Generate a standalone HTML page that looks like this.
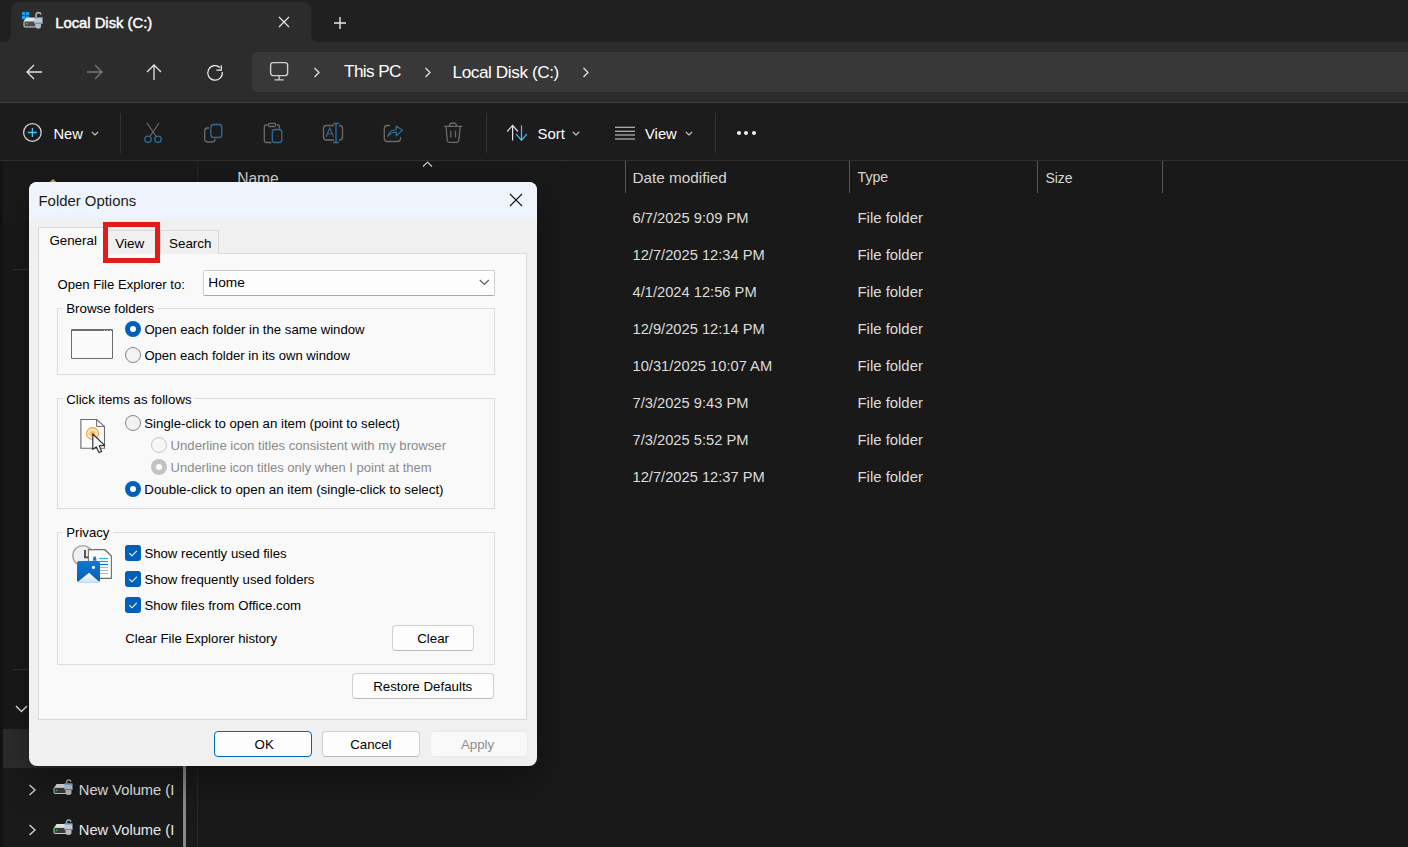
<!DOCTYPE html>
<html><head><meta charset="utf-8">
<style>
*{margin:0;padding:0;box-sizing:border-box}
html,body{width:1408px;height:847px;overflow:hidden;background:#191919;font-family:"Liberation Sans",sans-serif}
.a{position:absolute}
.t{position:absolute;line-height:1;white-space:nowrap}
svg{position:absolute;overflow:visible}
</style></head><body>
<div class="a" style="left:0;top:0;width:1408px;height:42px;background:#202020"></div>
<div class="a" style="left:11px;top:2px;width:300px;height:41px;background:#2c2c2c;border-radius:8px 8px 0 0"></div>
<svg style="left:3px;top:34px" width="8" height="8"><path d="M0 8 Q8 8 8 0 L8 8 Z" fill="#2c2c2c"/></svg>
<svg style="left:311px;top:34px" width="8" height="8"><path d="M8 8 Q0 8 0 0 L0 8 Z" fill="#2c2c2c"/></svg>
<div class="a" style="left:0;top:42px;width:1408px;height:60px;background:#2c2c2c"></div>
<div class="a" style="left:252px;top:52px;width:1170px;height:40px;background:#383838;border-radius:5px"></div>
<div class="a" style="left:0;top:102px;width:1408px;height:58px;background:#1c1c1c"></div>
<div class="a" style="left:0;top:102px;width:1408px;height:1px;background:#3d3d3d"></div>
<div class="a" style="left:0;top:160px;width:1408px;height:1px;background:#2f2f2f"></div>
<div class="a" style="left:0;top:161px;width:3px;height:686px;background:#131313"></div>
<div class="a" style="left:3px;top:161px;width:194px;height:686px;background:#1a1a1a"></div>
<div class="a" style="left:197px;top:161px;width:1px;height:686px;background:#282828"></div>
<div class="a" style="left:13px;top:269px;width:184px;height:1px;background:#333"></div>
<div class="a" style="left:13px;top:669px;width:184px;height:1px;background:#333"></div>
<div class="a" style="left:3px;top:729px;width:180px;height:39px;background:#2d2d2d"></div>
<div class="a" style="left:183px;top:600px;width:3px;height:247px;background:#8a8a8a;border-radius:1.5px"></div>
<svg style="left:44px;top:176px" width="18" height="10"><path d="M9 3 L17 10 L1 10 Z" fill="#f0a030"/></svg>
<svg style="left:21px;top:11px" width="22" height="18">
<rect x="1" y="1" width="3.3" height="3.3" fill="#1ba1ee"/><rect x="5" y="1" width="3.3" height="3.3" fill="#1ba1ee"/>
<rect x="1" y="5" width="3.3" height="3.3" fill="#1ba1ee"/><rect x="5" y="5" width="3.3" height="3.3" fill="#0f86d8"/>
<path d="M3 10 L5 6.5 L15 6.5 L15 16 L3 16 Z" fill="#e6e6e6"/>
<rect x="3" y="10" width="12" height="6" rx="1" fill="#4a4a4a" stroke="#d8d8d8" stroke-width="1"/>
<circle cx="5.8" cy="12.6" r="0.9" fill="#37d83a"/>
<path d="M15 6.5 V3.5 A2.6 2.6 0 0 1 20 3.5" fill="none" stroke="#a8b0b8" stroke-width="1.6"/>
<rect x="13" y="6" width="8.5" height="7" fill="#c4c8cc"/>
<rect x="13" y="6" width="8.5" height="1.2" fill="#2b9af0"/><rect x="13" y="11.6" width="8.5" height="1.2" fill="#2b9af0"/>
<path d="M14.5 13 H20 V15 A2.5 2.5 0 0 1 14.5 15 Z" fill="#b8bcc0"/>
</svg>
<div class="t" style="left:55.2px;top:16.37px;font-size:14.8px;color:#fff;-webkit-text-stroke:0.45px #fff">Local Disk (C:)</div>
<svg style="left:278px;top:16px" width="12" height="12"><path d="M1 1 L11 11 M11 1 L1 11" stroke="#e8e8e8" stroke-width="1.2"/></svg>
<svg style="left:333px;top:16px" width="14" height="14"><path d="M7 1 V13 M1 7 H13" stroke="#e8e8e8" stroke-width="1.4"/></svg>
<svg style="left:26px;top:64px" width="17" height="16"><path d="M16 8 H1.2 M8 1 L1 8 L8 15" fill="none" stroke="#e4e4e4" stroke-width="1.3"/></svg>
<svg style="left:86px;top:64px" width="17" height="16"><path d="M1 8 H15.8 M9 1 L16 8 L9 15" fill="none" stroke="#7a7a7a" stroke-width="1.3"/></svg>
<svg style="left:146px;top:64px" width="16" height="17"><path d="M8 16 V1.2 M1 8 L8 1 L15 8" fill="none" stroke="#e4e4e4" stroke-width="1.3"/></svg>
<svg style="left:206px;top:64px" width="17" height="17"><path d="M16.3 8.0 A7.3 7.3 0 1 1 14.0 3.5" fill="none" stroke="#f0f0f0" stroke-width="1.2"/><path d="M15.3 1.2 V6.2 H10.4" fill="none" stroke="#f0f0f0" stroke-width="1.2"/></svg>
<svg style="left:269px;top:61px" width="21" height="21"><rect x="1.6" y="1.6" width="17" height="13" rx="2.5" fill="none" stroke="#d0d0d0" stroke-width="1.4"/><path d="M10.1 15 V18.6 M5.5 18.8 H14.7" stroke="#d0d0d0" stroke-width="1.3"/></svg>
<svg style="left:313px;top:67px" width="8" height="11"><path d="M1.5 1 L6 5.5 L1.5 10" fill="none" stroke="#e0e0e0" stroke-width="1.3"/></svg>
<svg style="left:424px;top:67px" width="8" height="11"><path d="M1.5 1 L6 5.5 L1.5 10" fill="none" stroke="#e0e0e0" stroke-width="1.3"/></svg>
<svg style="left:582px;top:67px" width="8" height="11"><path d="M1.5 1 L6 5.5 L1.5 10" fill="none" stroke="#e0e0e0" stroke-width="1.3"/></svg>
<div class="t" style="left:344px;top:63.04px;font-size:17.2px;color:#fff;letter-spacing:-0.6px">This PC</div>
<div class="t" style="left:452.5px;top:64.04px;font-size:17.2px;color:#fff;letter-spacing:-0.42px">Local Disk (C:)</div>
<svg style="left:22px;top:122px" width="21" height="21"><circle cx="10.4" cy="10.5" r="8.8" fill="none" stroke="#d2d2d2" stroke-width="1.3"/><path d="M10.4 6 V15 M5.9 10.5 H14.9" stroke="#4cc2ff" stroke-width="1.3"/></svg>
<div class="t" style="left:53.5px;top:127.06px;font-size:14.7px;color:#fff;">New</div>
<svg style="left:91px;top:131px" width="8" height="5"><path d="M0.8 0.8 L4 4 L7.2 0.8" fill="none" stroke="#cfcfcf" stroke-width="1.1"/></svg>
<div class="a" style="left:120px;top:113px;width:1px;height:40px;background:#333"></div>
<div class="a" style="left:486px;top:113px;width:1px;height:40px;background:#333"></div>
<div class="a" style="left:715px;top:113px;width:1px;height:40px;background:#333"></div>
<svg style="left:140px;top:118px" width="26" height="28"><path d="M7 5 L15.8 18 M19 5 L10.2 18" stroke="#6a6a6a" stroke-width="1.2" fill="none"/><circle cx="8" cy="21.3" r="3.2" fill="none" stroke="#316d95" stroke-width="1.3"/><circle cx="18" cy="21.3" r="3.2" fill="none" stroke="#316d95" stroke-width="1.3"/></svg>
<svg style="left:200px;top:118px" width="26" height="28"><path d="M9 10 H7.5 A3 3 0 0 0 4.7 13 V21 A3 3 0 0 0 7.5 24 H12 A3 3 0 0 0 15 21" fill="none" stroke="#6a6a6a" stroke-width="1.3"/><rect x="10.8" y="6.5" width="11" height="13" rx="3" fill="none" stroke="#316d95" stroke-width="1.3"/></svg>
<svg style="left:260px;top:118px" width="26" height="28"><path d="M7.5 7 H6 A2 2 0 0 0 4.3 9 V22.5 A2 2 0 0 0 6 24.5 H11.5 M17 7 H18.5 A1.5 1.5 0 0 1 19.3 8.5 V10.5" fill="none" stroke="#6a6a6a" stroke-width="1.3"/><rect x="8.3" y="5.3" width="7.5" height="3.2" rx="1.5" fill="none" stroke="#6a6a6a" stroke-width="1.3"/><rect x="12.3" y="11.5" width="9.5" height="13" rx="2.5" fill="none" stroke="#316d95" stroke-width="1.3"/></svg>
<svg style="left:320px;top:118px" width="26" height="28"><path d="M14 7.5 H6.5 A3 3 0 0 0 3.5 10.5 V19 A3 3 0 0 0 6.5 22 H14 M19 7.5 H19.5 A3 3 0 0 1 22.5 10.5 V19 A3 3 0 0 1 19.5 22 H19" fill="none" stroke="#6a6a6a" stroke-width="1.3"/><path d="M16 5.5 V24.5 M13.3 5.5 H18.8 M13.3 24.5 H18.8" stroke="#316d95" stroke-width="1.3"/><path d="M6 18.8 L9.8 10 L13.6 18.8 M7.3 15.8 H12.3" fill="none" stroke="#316d95" stroke-width="1.1"/></svg>
<svg style="left:380px;top:118px" width="26" height="28"><path d="M10 7.5 H7 A3 3 0 0 0 4.3 10.5 V20.5 A3 3 0 0 0 7 23.5 H17.5 A3 3 0 0 0 20.5 20.5 V19" fill="none" stroke="#6a6a6a" stroke-width="1.3"/><path d="M7.8 18.5 C9 13.5 12 11.5 16.2 11.8 V8 L22.5 12.2 L16.2 17.8 V14.2 C12.5 14 10 15.5 7.8 18.5 Z" fill="none" stroke="#316d95" stroke-width="1.2" stroke-linejoin="round"/></svg>
<svg style="left:440px;top:118px" width="26" height="28"><path d="M4 8.3 H22.3 M9.5 8 A3.5 3 0 0 1 16.5 8 M6 8.5 L7.3 22.5 A2 2 0 0 0 9.3 24.3 H16.8 A2 2 0 0 0 18.8 22.5 L20.2 8.5 M10.8 12.8 V19.5 M15.5 12.8 V19.5" fill="none" stroke="#6a6a6a" stroke-width="1.3"/></svg>
<svg style="left:505px;top:123px" width="24" height="20"><path d="M7.6 17.5 V2.6 M2.3 8.5 L7.6 2.4 L12.9 8.5" fill="none" stroke="#e4e4e4" stroke-width="1.2"/><path d="M16.5 2.6 V17.4 M11.2 11.2 L16.5 17.4 L21.8 11.2" fill="none" stroke="#4cc2ff" stroke-width="1.2"/></svg>
<div class="t" style="left:537.5px;top:126.89px;font-size:14.9px;color:#fff;">Sort</div>
<svg style="left:572px;top:131px" width="8" height="5"><path d="M0.8 0.8 L4 4 L7.2 0.8" fill="none" stroke="#cfcfcf" stroke-width="1.1"/></svg>
<svg style="left:614px;top:123px" width="22" height="18"><path d="M1 4.3 H21 M1 8.3 H21 M1 12 H21 M1 16 H21" stroke="#d8d8d8" stroke-width="1.1"/></svg>
<div class="t" style="left:645px;top:126.97px;font-size:14.8px;color:#fff;">View</div>
<svg style="left:685px;top:131px" width="8" height="5"><path d="M0.8 0.8 L4 4 L7.2 0.8" fill="none" stroke="#cfcfcf" stroke-width="1.1"/></svg>
<div class="a" style="left:736.6px;top:131.4px;width:4px;height:4px;border-radius:50%;background:#f0f0f0"></div>
<div class="a" style="left:744.4px;top:131.4px;width:4px;height:4px;border-radius:50%;background:#f0f0f0"></div>
<div class="a" style="left:752.2px;top:131.4px;width:4px;height:4px;border-radius:50%;background:#f0f0f0"></div>
<div class="a" style="left:625px;top:161px;width:1px;height:32px;background:#555"></div>
<div class="a" style="left:849px;top:161px;width:1px;height:32px;background:#555"></div>
<div class="a" style="left:1037px;top:161px;width:1px;height:32px;background:#555"></div>
<div class="a" style="left:1162px;top:161px;width:1px;height:32px;background:#555"></div>
<svg style="left:422px;top:161px" width="11" height="7"><path d="M1 5.5 L5.5 1.2 L10 5.5" fill="none" stroke="#dedede" stroke-width="1.05"/></svg>
<div class="t" style="left:237.2px;top:170.79px;font-size:15.6px;color:#d6d6d6;">Name</div>
<div class="t" style="left:632.5px;top:169.55px;font-size:15.3px;color:#d6d6d6;">Date modified</div>
<div class="t" style="left:857.5px;top:170.48px;font-size:14.2px;color:#d6d6d6;">Type</div>
<div class="t" style="left:1045.4px;top:170.65px;font-size:14.0px;color:#d6d6d6;">Size</div>
<div class="t" style="left:632.5px;top:211.06px;font-size:14.7px;color:#dcdcdc;">6/7/2025 9:09 PM</div>
<div class="t" style="left:857.5px;top:210.89px;font-size:14.9px;color:#dcdcdc;">File folder</div>
<div class="t" style="left:632.5px;top:248.06px;font-size:14.7px;color:#dcdcdc;">12/7/2025 12:34 PM</div>
<div class="t" style="left:857.5px;top:247.89px;font-size:14.9px;color:#dcdcdc;">File folder</div>
<div class="t" style="left:632.5px;top:285.06px;font-size:14.7px;color:#dcdcdc;">4/1/2024 12:56 PM</div>
<div class="t" style="left:857.5px;top:284.89px;font-size:14.9px;color:#dcdcdc;">File folder</div>
<div class="t" style="left:632.5px;top:322.06px;font-size:14.7px;color:#dcdcdc;">12/9/2025 12:14 PM</div>
<div class="t" style="left:857.5px;top:321.89px;font-size:14.9px;color:#dcdcdc;">File folder</div>
<div class="t" style="left:632.5px;top:359.06px;font-size:14.7px;color:#dcdcdc;">10/31/2025 10:07 AM</div>
<div class="t" style="left:857.5px;top:358.89px;font-size:14.9px;color:#dcdcdc;">File folder</div>
<div class="t" style="left:632.5px;top:396.06px;font-size:14.7px;color:#dcdcdc;">7/3/2025 9:43 PM</div>
<div class="t" style="left:857.5px;top:395.89px;font-size:14.9px;color:#dcdcdc;">File folder</div>
<div class="t" style="left:632.5px;top:433.06px;font-size:14.7px;color:#dcdcdc;">7/3/2025 5:52 PM</div>
<div class="t" style="left:857.5px;top:432.89px;font-size:14.9px;color:#dcdcdc;">File folder</div>
<div class="t" style="left:632.5px;top:470.06px;font-size:14.7px;color:#dcdcdc;">12/7/2025 12:37 PM</div>
<div class="t" style="left:857.5px;top:469.89px;font-size:14.9px;color:#dcdcdc;">File folder</div>
<svg style="left:15px;top:705px" width="13" height="8"><path d="M1 1 L6.5 6.5 L12 1" fill="none" stroke="#e4e4e4" stroke-width="1.5"/></svg>
<svg style="left:28px;top:784px" width="9" height="12"><path d="M1.5 1 L7 6 L1.5 11" fill="none" stroke="#d0d0d0" stroke-width="1.45"/></svg>
<svg style="left:53px;top:779px" width="21" height="17">
<path d="M1 9 L3.5 5 L14 5 L14 13 L1 13 Z" fill="#e0e0e0"/>
<rect x="1" y="8.5" width="13.5" height="6" rx="1" fill="#3a3a3a" stroke="#c8c8c8" stroke-width="1"/>
<circle cx="3.7" cy="11.5" r="0.8" fill="#37d83a"/>
<path d="M13.5 4.5 V2.8 A2.3 2.3 0 0 1 18 2.8" fill="none" stroke="#a8b0b8" stroke-width="1.4"/>
<rect x="11.5" y="4.5" width="8" height="6.5" fill="#c4c8cc"/>
<rect x="11.5" y="4.5" width="8" height="1" fill="#2b9af0"/><rect x="11.5" y="10" width="8" height="1" fill="#2b9af0"/>
<path d="M12.5 11 H18.5 V13.5 A3 2.5 0 0 1 12.5 13.5 Z" fill="#b8bcc0"/>
</svg>
<div class="a" style="left:78px;top:779px;width:98px;height:20px;overflow:hidden"><div class="t" style="left:0.8px;top:4.06px;font-size:14.7px;color:#e8e8e8;">New Volume (I</div>
</div>
<svg style="left:28px;top:824px" width="9" height="12"><path d="M1.5 1 L7 6 L1.5 11" fill="none" stroke="#d0d0d0" stroke-width="1.45"/></svg>
<svg style="left:53px;top:819px" width="21" height="17">
<path d="M1 9 L3.5 5 L14 5 L14 13 L1 13 Z" fill="#e0e0e0"/>
<rect x="1" y="8.5" width="13.5" height="6" rx="1" fill="#3a3a3a" stroke="#c8c8c8" stroke-width="1"/>
<circle cx="3.7" cy="11.5" r="0.8" fill="#37d83a"/>
<path d="M13.5 4.5 V2.8 A2.3 2.3 0 0 1 18 2.8" fill="none" stroke="#a8b0b8" stroke-width="1.4"/>
<rect x="11.5" y="4.5" width="8" height="6.5" fill="#c4c8cc"/>
<rect x="11.5" y="4.5" width="8" height="1" fill="#2b9af0"/><rect x="11.5" y="10" width="8" height="1" fill="#2b9af0"/>
<path d="M12.5 11 H18.5 V13.5 A3 2.5 0 0 1 12.5 13.5 Z" fill="#b8bcc0"/>
</svg>
<div class="a" style="left:78px;top:819px;width:98px;height:20px;overflow:hidden"><div class="t" style="left:0.8px;top:4.06px;font-size:14.7px;color:#e8e8e8;">New Volume (I</div>
</div>
<div class="a" style="left:29px;top:182px;width:508px;height:584px;background:#f0f0f0;border-radius:8px;overflow:hidden;box-shadow:0 12px 40px rgba(0,0,0,.38),0 0 0 1px rgba(0,0,0,.06)"><div class="a" style="left:0;top:0;width:508px;height:37px;background:#eff3fb"></div></div>
<div class="t" style="left:38.5px;top:193.89px;font-size:14.9px;color:#1b1b1b;">Folder Options</div>
<svg style="left:509px;top:193px" width="14" height="14"><path d="M1 1 L13 13 M13 1 L1 13" stroke="#1a1a1a" stroke-width="1.2"/></svg>
<div class="a" style="left:38px;top:253px;width:489px;height:467px;background:#f9f9f9;border:1px solid #dadada"></div>
<div class="a" style="left:104px;top:230px;width:57px;height:24px;background:#f0f0f0;border:1px solid #d9d9d9;border-bottom:none"></div>
<div class="a" style="left:160px;top:230px;width:59px;height:24px;background:#f0f0f0;border:1px solid #d9d9d9;border-bottom:none"></div>
<div class="a" style="left:38px;top:227px;width:66px;height:28px;background:#f9f9f9;border:1px solid #d9d9d9;border-bottom:none"></div>
<div class="t" style="left:49.4px;top:234.20px;font-size:13.35px;color:#000;">General</div>
<div class="t" style="left:115.3px;top:237.07px;font-size:13.5px;color:#000;">View</div>
<div class="t" style="left:169px;top:237.16px;font-size:13.4px;color:#000;">Search</div>
<div class="a" style="left:103px;top:222px;width:57px;height:41px;border:5px solid #e41b1b"></div>
<div class="t" style="left:57.5px;top:278.41px;font-size:13.1px;color:#000;">Open File Explorer to:</div>
<div class="a" style="left:203px;top:270px;width:292px;height:26px;background:#fdfdfd;border:1px solid #cfcfcf;border-bottom-color:#a8a8a8;border-radius:2px"></div>
<div class="t" style="left:208.3px;top:276.20px;font-size:13.7px;color:#000;">Home</div>
<svg style="left:479px;top:279px" width="11" height="7"><path d="M0.8 1 L5.3 5.5 L9.8 1" fill="none" stroke="#555" stroke-width="1.1"/></svg>
<div class="a" style="left:57px;top:308px;width:438px;height:67px;border:1px solid #dcdcdc"></div>
<div class="a" style="left:63px;top:306px;width:94px;height:5px;background:#f9f9f9"></div>
<div class="t" style="left:66.25px;top:302.24px;font-size:13.3px;color:#000;">Browse folders</div>
<div class="a" style="left:57px;top:398px;width:438px;height:111px;border:1px solid #dcdcdc"></div>
<div class="a" style="left:63px;top:396px;width:131px;height:5px;background:#f9f9f9"></div>
<div class="t" style="left:66.2px;top:392.53px;font-size:13.2px;color:#000;">Click items as follows</div>
<div class="a" style="left:57px;top:532px;width:438px;height:133px;border:1px solid #dcdcdc"></div>
<div class="a" style="left:63px;top:530px;width:50px;height:5px;background:#f9f9f9"></div>
<div class="t" style="left:66.2px;top:526.33px;font-size:13.2px;color:#000;">Privacy</div>
<div class="a" style="left:71px;top:329px;width:42px;height:30px;border:1px solid #6d6d6d;border-top:2px solid #6d6d6d;background:#fafafa;border-radius:1px"></div>
<svg style="left:103px;top:330px" width="10" height="2"><path d="M1 0.6 H2 M4 0.6 H5 M7 0.6 H8" stroke="#ddd" stroke-width="1"/></svg>
<div class="a" style="left:125px;top:321px;width:16px;height:16px;border-radius:50%;background:#005fb8"><div class="a" style="left:5px;top:5px;width:6px;height:6px;border-radius:50%;background:#fff"></div></div>
<div class="t" style="left:144.4px;top:323.35px;font-size:13.17px;color:#000;">Open each folder in the same window</div>
<div class="a" style="left:125px;top:347px;width:16px;height:16px;border-radius:50%;background:#f3f3f3;border:1px solid #858585"></div>
<div class="t" style="left:144.4px;top:349.24px;font-size:13.07px;color:#000;">Open each folder in its own window</div>
<svg style="left:78px;top:417px" width="32" height="40">
<defs><radialGradient id="og"><stop offset="0" stop-color="#f39a2a"/><stop offset="0.55" stop-color="#fbd7a6"/><stop offset="1" stop-color="#ffffff"/></radialGradient></defs>
<path d="M2.9 2.5 H18.6 L26.5 9.4 V31.2 H2.9 Z" fill="#fdfdfd" stroke="#6a6a6a" stroke-width="1.1"/>
<path d="M18.6 2.5 V9.4 H26.5" fill="none" stroke="#6a6a6a" stroke-width="1"/>
<circle cx="14.5" cy="16.5" r="5.9" fill="url(#og)" stroke="#f5a01e" stroke-width="1.2"/>
<path d="M14.8 17 V32.4 L18.3 29.9 L21 35.6 L23.6 34.4 L21.2 28.8 L26.6 28.4 Z" fill="#f6f6f6" stroke="#262626" stroke-width="1.1" stroke-linejoin="round"/>
</svg>
<div class="a" style="left:125px;top:415px;width:16px;height:16px;border-radius:50%;background:#f3f3f3;border:1px solid #858585"></div>
<div class="t" style="left:144.3px;top:417.31px;font-size:13.22px;color:#000;">Single-click to open an item (point to select)</div>
<div class="a" style="left:151px;top:437px;width:16px;height:16px;border-radius:50%;background:#f7f7f7;border:1px solid #c6c6c6"></div>
<div class="t" style="left:170.6px;top:439.40px;font-size:13.11px;color:#8a8a8a;">Underline icon titles consistent with my browser</div>
<div class="a" style="left:151px;top:459px;width:16px;height:16px;border-radius:50%;background:#c3c3c3"><div class="a" style="left:5px;top:5px;width:6px;height:6px;border-radius:50%;background:#fff"></div></div>
<div class="t" style="left:170.6px;top:461.52px;font-size:12.97px;color:#8a8a8a;">Underline icon titles only when I point at them</div>
<div class="a" style="left:125px;top:481px;width:16px;height:16px;border-radius:50%;background:#005fb8"><div class="a" style="left:5px;top:5px;width:6px;height:6px;border-radius:50%;background:#fff"></div></div>
<div class="t" style="left:144.3px;top:483.21px;font-size:13.34px;color:#000;">Double-click to open an item (single-click to select)</div>
<svg style="left:66px;top:540px" width="52" height="50">
<defs><linearGradient id="tg" x1="0" y1="0" x2="0" y2="1"><stop offset="0" stop-color="#0b7ad9"/><stop offset="1" stop-color="#0a5cb3"/></linearGradient>
<linearGradient id="mg" x1="0" y1="0" x2="0" y2="1"><stop offset="0" stop-color="#ffffff"/><stop offset="1" stop-color="#cce4fa"/></linearGradient></defs>
<circle cx="16.8" cy="15.6" r="10" fill="#efefef" stroke="#a3a3a3" stroke-width="1.4"/>
<path d="M19 10 V17.4 H22.5" fill="none" stroke="#4e4e4e" stroke-width="1.9"/>
<path d="M22.4 9.6 H38.8 L45.4 16.2 V38.4 H22.4 Z" fill="#fbfbfb" stroke="#6e6e6e" stroke-width="1.1"/>
<path d="M38.8 9.6 L45.4 16.2" fill="none" stroke="#6e6e6e" stroke-width="1.1"/>
<path d="M33 18.5 H42" stroke="#2ab6f2" stroke-width="1.1"/>
<path d="M33 21.5 H42" stroke="#1d9ee8" stroke-width="1.1"/>
<path d="M33 24.5 H42" stroke="#0f6fd0" stroke-width="1.1"/>
<path d="M33 27.5 H42 M33 30.5 H42 M33 33.5 H42" stroke="#b4b4b4" stroke-width="1.1"/>
<path d="M27.6 16.5 L29.8 16.5 L30.6 20.8 L26.8 20.8 Z" fill="#1b78d4"/>
<rect x="11" y="21" width="23" height="21.2" rx="2" fill="url(#tg)"/>
<path d="M11.2 42.2 L23 32.8 L33.8 42.2 Z" fill="url(#mg)"/>
<circle cx="27.4" cy="27.4" r="1.6" fill="#fff"/>
</svg>
<div class="a" style="left:125px;top:545px;width:16px;height:16px;border-radius:3px;background:#005fb8"></div><svg style="left:125px;top:545px" width="16" height="16"><path d="M4.3 8.2 L7 10.8 L11.8 5.8" fill="none" stroke="#fff" stroke-width="1.1"/></svg>
<div class="t" style="left:144.4px;top:547.33px;font-size:13.2px;color:#000;">Show recently used files</div>
<div class="a" style="left:125px;top:571px;width:16px;height:16px;border-radius:3px;background:#005fb8"></div><svg style="left:125px;top:571px" width="16" height="16"><path d="M4.3 8.2 L7 10.8 L11.8 5.8" fill="none" stroke="#fff" stroke-width="1.1"/></svg>
<div class="t" style="left:144.4px;top:573.33px;font-size:13.2px;color:#000;">Show frequently used folders</div>
<div class="a" style="left:125px;top:597px;width:16px;height:16px;border-radius:3px;background:#005fb8"></div><svg style="left:125px;top:597px" width="16" height="16"><path d="M4.3 8.2 L7 10.8 L11.8 5.8" fill="none" stroke="#fff" stroke-width="1.1"/></svg>
<div class="t" style="left:144.4px;top:599.33px;font-size:13.2px;color:#000;">Show files from Office.com</div>
<div class="t" style="left:125.3px;top:632.33px;font-size:13.2px;color:#000;">Clear File Explorer history</div>
<div class="btn a" style="left:392px;top:625px;width:82px;height:26px;background:#fdfdfd;border:1px solid #d0d0d0;border-bottom-color:#bcbcbc;border-radius:4px"></div>
<div class="t" style="left:417.2px;top:632.24px;font-size:13.3px;color:#000;">Clear</div>
<div class="btn a" style="left:352px;top:673px;width:142px;height:26px;background:#fdfdfd;border:1px solid #d0d0d0;border-bottom-color:#bcbcbc;border-radius:4px"></div>
<div class="t" style="left:373.2px;top:680.24px;font-size:13.3px;color:#000;">Restore Defaults</div>
<div class="btn a" style="left:214px;top:731px;width:98px;height:26px;background:#fdfdfd;border:1.5px solid #0067c0;border-radius:4px"></div>
<div class="t" style="left:254.6px;top:738.24px;font-size:13.3px;color:#000;">OK</div>
<div class="btn a" style="left:322px;top:731px;width:98px;height:26px;background:#fdfdfd;border:1px solid #d0d0d0;border-bottom-color:#bcbcbc;border-radius:4px"></div>
<div class="t" style="left:350.2px;top:738.24px;font-size:13.3px;color:#000;">Cancel</div>
<div class="btn a" style="left:430px;top:731px;width:98px;height:26px;background:#f9f9f9;border:1px solid #ebebeb;border-radius:4px"></div>
<div class="t" style="left:460.9px;top:738.24px;font-size:13.3px;color:#8d8d8d;">Apply</div>
</body></html>
